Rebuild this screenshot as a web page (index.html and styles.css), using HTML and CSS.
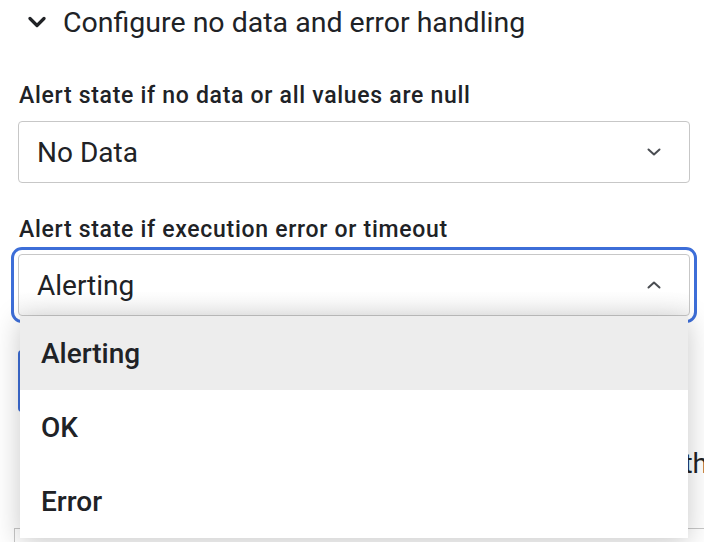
FILE: index.html
```html
<!DOCTYPE html>
<html>
<head>
<meta charset="utf-8">
<link rel="stylesheet" href="styles.css">
</head>
<body>
<div class="page">
  <div class="section-head">
    <svg class="head-chev" width="18" height="12" viewBox="0 0 18 12"><path d="M2 2.5 L9 9.5 L16 2.5" fill="none" stroke="#202226" stroke-width="3.2" stroke-linecap="round" stroke-linejoin="round"/></svg>
    <span>Configure no data and error handling</span>
  </div>

  <div class="field">
    <label class="field-label">Alert state if no data or all values are null</label>
    <div class="select">
      <span>No Data</span>
      <svg class="sel-chev" width="14" height="8" viewBox="0 0 14 8"><path d="M1.5 1.5 L7 6.5 L12.5 1.5" fill="none" stroke="#4a4d52" stroke-width="2" stroke-linecap="round" stroke-linejoin="round"/></svg>
    </div>
  </div>

  <div class="field field-open">
    <label class="field-label">Alert state if execution error or timeout</label>
    <div class="select-wrap">
      <div class="select focused">
        <span>Alerting</span>
        <svg class="sel-chev" width="14" height="8" viewBox="0 0 14 8"><path d="M1.5 6.5 L7 1.5 L12.5 6.5" fill="none" stroke="#4a4d52" stroke-width="2" stroke-linecap="round" stroke-linejoin="round"/></svg>
      </div>
      <ul class="menu">
        <li class="active">Alerting</li>
        <li>OK</li>
        <li>Error</li>
      </ul>
    </div>
  </div>

  <div class="behind">
    <div class="radio-card"></div>
    <div class="behind-text"><span>Evaluate against all data points that match the path</span></div>
    <div class="behind-box"></div>
  </div>
</div>
</body>
</html>
```

FILE: styles.css
```css
html, body {
  margin: 0;
  padding: 0;
  background: #ffffff;
  overflow: hidden;
}
body {
  font-family: Roboto, "Noto Sans", "Liberation Sans", sans-serif;
  color: #202226;
  width: 704px;
  height: 542px;
}
.page {
  padding: 0 14px 0 18px;
}
.section-head {
  display: flex;
  align-items: center;
  height: 44px;
  padding-left: 10px;
  gap: 17px;
  font-size: 28.5px;
  color: #202226;
}
.head-chev {
  flex: none;
}
.field {
  margin-top: 38px;
}
.field-label {
  display: block;
  font-size: 23px;
  font-weight: 500;
  letter-spacing: 0.7px;
  line-height: 28px;
  padding-left: 1px;
  color: #202226;
}
.select {
  margin-top: 11px;
  height: 62px;
  box-sizing: border-box;
  border: 1px solid #c7c7c7;
  border-radius: 4px;
  display: flex;
  align-items: center;
  justify-content: space-between;
  padding: 0 28px 0 18px;
  font-size: 28px;
  color: #202226;
  background: #fff;
}
.field-open {
  margin-top: 33px;
}
.field-open .select {
  margin-top: 10px;
}
.select-wrap {
  position: relative;
  z-index: 2;
}
.select.focused {
  outline: 3px solid #3d6ed8;
  outline-offset: 4px;
  background: linear-gradient(#ffffff 60%, #f6f6f6);
}
.menu {
  position: absolute;
  left: 2px;
  right: 2px;
  top: 62px;
  margin: 0;
  padding: 0;
  list-style: none;
  background: #fff;
  box-shadow: 0 4px 26px rgba(0, 0, 0, 0.22);
}
.menu li {
  height: 74px;
  display: flex;
  align-items: center;
  padding-left: 21px;
  font-size: 28px;
  font-weight: 500;
  color: #202226;
}
.menu li.active {
  background: #ededed;
}
.behind {
  position: relative;
  z-index: 1;
  margin-top: 34px;
}
.radio-card {
  height: 62px;
  border-left: 3px solid #3d6ed8;
  border-radius: 4px 0 0 4px;
}
.behind-text {
  margin-top: 35px;
  font-size: 28px;
  line-height: 34px;
  white-space: nowrap;
  overflow: hidden;
  color: #202226;
  display: flex;
  justify-content: flex-end;
  margin-right: -18px;
}
.behind-text span {
  flex: none;
}
.behind-box {
  margin-top: 47px;
  margin-left: -4px;
  margin-right: -14px;
  height: 40px;
  border-top: 1px solid #c7c7c7;
  border-left: 1px solid #c7c7c7;
}
```
